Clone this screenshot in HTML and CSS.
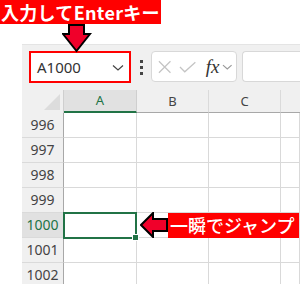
FILE: index.html
```html
<!DOCTYPE html>
<html>
<head>
  <title>Name Box Jump</title>
  <link rel="stylesheet" href="styles.css">
</head>
<body>

  <div class="page">
    <div class="top">
      <div class="label-top">入力してEnterキー</div>
    </div>

    <svg class="arrow-down" width="30" height="30" viewBox="0 0 30 30">
      <path d="M7 1 H22 V10 H28 L14.5 27 L1 10 H7 Z" fill="#f0002a" stroke="#000" stroke-width="2" stroke-linejoin="miter"/>
    </svg>

    <div class="excel">
      <div class="toolbar">
        <div class="namebox">
          <span class="ref">A1000</span>
          <svg class="chev" width="12" height="8" viewBox="0 0 12 8">
            <path d="M1 1.5 L6 6 L11 1.5" fill="none" stroke="#444" stroke-width="1.2"/>
          </svg>
        </div>
        <div class="dots"><i></i><i></i><i></i></div>
        <div class="fbuttons">
          <svg width="16" height="16" viewBox="0 0 16 16">
            <path d="M2 2 L14 14 M14 2 L2 14" stroke="#c4c4c4" stroke-width="1.3"/>
          </svg>
          <svg width="18" height="16" viewBox="0 0 18 16">
            <path d="M1 8 L6 13 L17 3" fill="none" stroke="#c4c4c4" stroke-width="1.3"/>
          </svg>
          <span class="fx">fx</span>
          <svg width="11" height="8" viewBox="0 0 11 8">
            <path d="M1 2 L5.5 6 L10 2" fill="none" stroke="#999" stroke-width="1.2"/>
          </svg>
        </div>
        <div class="formula"></div>
      </div>

      <div class="grid">
        <div class="corner"><span class="tri"></span></div>
        <div class="colhead sel">A</div>
        <div class="colhead">B</div>
        <div class="colhead">C</div>
        <div class="colhead last"></div>

        <div class="rowhead">996</div><div class="cell"></div><div class="cell"></div><div class="cell"></div><div class="cell"></div>
        <div class="rowhead">997</div><div class="cell"></div><div class="cell"></div><div class="cell"></div><div class="cell"></div>
        <div class="rowhead">998</div><div class="cell"></div><div class="cell"></div><div class="cell"></div><div class="cell"></div>
        <div class="rowhead">999</div><div class="cell"></div><div class="cell"></div><div class="cell"></div><div class="cell"></div>
        <div class="rowhead sel">1000</div><div class="cell active"><span class="handle"></span></div><div class="cell"></div><div class="cell"></div><div class="cell"></div>
        <div class="rowhead">1001</div><div class="cell"></div><div class="cell"></div><div class="cell"></div><div class="cell"></div>
        <div class="rowhead">1002</div><div class="cell"></div><div class="cell"></div><div class="cell"></div><div class="cell"></div>
      </div>
    </div>

    <div class="callout">
      <svg width="28" height="26" viewBox="0 0 28 26">
        <path d="M27 7 H13 V1 L1 13 L13 25 V19 H27 Z" fill="#f0002a" stroke="#000" stroke-width="2"/>
      </svg>
      <div class="label-jump">一瞬でジャンプ</div>
    </div>
  </div>

</body>
</html>
```

FILE: styles.css
```css
body {
  margin: 0;
  font-family: "Noto Sans", "Noto Sans CJK JP", sans-serif;
  background: #fff;
}

.page {
  position: relative;
  width: 300px;
  height: 284px;
  overflow: hidden;
}

.top {
  height: 44px;
}

.label-top {
  display: inline-block;
  background: #ff0000;
  color: #fff;
  font-family: "Noto Sans CJK JP", sans-serif;
  font-weight: bold;
  font-size: 18px;
  line-height: 24px;
  height: 24px;
  padding: 0 1px;
  letter-spacing: 0.3px;
}

.arrow-down {
  position: absolute;
  left: 62px;
  top: 24px;
  z-index: 2;
}

.excel {
  margin-left: 22px;
  background: #f0f0f0;
  height: 240px;
  box-shadow: inset 0 1px 0 #e4e4e4;
}

.toolbar {
  height: 46px;
  display: flex;
  align-items: flex-start;
  padding-top: 7px;
  box-sizing: border-box;
}

.namebox {
  width: 102px;
  height: 32px;
  box-sizing: border-box;
  margin-left: 7px;
  border: 2px solid #ff0000;
  background: #fff;
  display: flex;
  align-items: center;
  padding: 0 5px 0 6px;
}

.ref {
  flex: 1;
  font-size: 15px;
  color: #333;
}

.chev {
  margin-top: 1px;
}

.dots {
  width: 20px;
  height: 32px;
  display: flex;
  flex-direction: column;
  align-items: center;
  justify-content: center;
  gap: 3px;
}

.dots i {
  width: 3px;
  height: 3px;
  background: #444;
}

.fbuttons {
  width: 86px;
  height: 31px;
  box-sizing: border-box;
  border: 1px solid #d8d8d8;
  border-radius: 4px;
  background: #fff;
  display: flex;
  align-items: center;
  padding: 0 3px 0 5px;
  gap: 7px;
}

.fx {
  font-family: "Liberation Serif", serif;
  font-style: italic;
  font-size: 19px;
  color: #333;
  margin-left: 2px;
  margin-right: -4px;
}

.formula {
  flex: 1;
  height: 31px;
  box-sizing: border-box;
  margin-left: 5px;
  border: 1px solid #d8d8d8;
  border-right: none;
  border-radius: 4px 0 0 4px;
  background: #fff;
}

.grid {
  display: grid;
  grid-template-columns: 42px 73px 72px 72px 19px;
  grid-template-rows: 23px repeat(7, 25px);
}

.corner {
  position: relative;
  border-right: 1px solid #cfcfcf;
}

.tri {
  position: absolute;
  right: 3px;
  bottom: 3px;
  width: 0;
  height: 0;
  border-left: 16px solid transparent;
  border-bottom: 16px solid #dcdcdc;
}

.colhead {
  font-size: 13px;
  color: #444;
  text-align: center;
  line-height: 22px;
  border-right: 1px solid #dadada;
  border-bottom: 1px solid #a8a8a8;
}

.colhead.sel {
  background: #e1e1e1;
  color: #217346;
  border-bottom: 2px solid #217346;
  line-height: 21px;
  border-right-color: #cfcfcf;
}

.colhead.last {
  border-right: none;
}

.rowhead {
  font-size: 14px;
  color: #444;
  text-align: center;
  line-height: 24px;
  border-bottom: 1px solid #dadada;
  border-right: 1px solid #a8a8a8;
}

.rowhead.sel {
  background: #e1e1e1;
  color: #217346;
}

.cell {
  background: #fff;
  border-right: 1px solid #d9d9d9;
  border-bottom: 1px solid #d9d9d9;
}

.cell.active {
  position: relative;
  border: 2px solid #217346;
  margin: -1px 0 -1px -1px;
  z-index: 1;
}

.handle {
  position: absolute;
  right: -4px;
  bottom: -4px;
  width: 5px;
  height: 5px;
  background: #217346;
  border: 1px solid #fff;
}

.callout {
  position: absolute;
  left: 140px;
  top: 212px;
  display: flex;
  align-items: center;
}

.label-jump {
  background: #ff0000;
  color: #fff;
  font-family: "Noto Sans CJK JP", sans-serif;
  font-size: 18px;
  font-weight: 500;
  height: 25px;
  line-height: 25px;
  padding: 0 4px 0 2px;
}
```
